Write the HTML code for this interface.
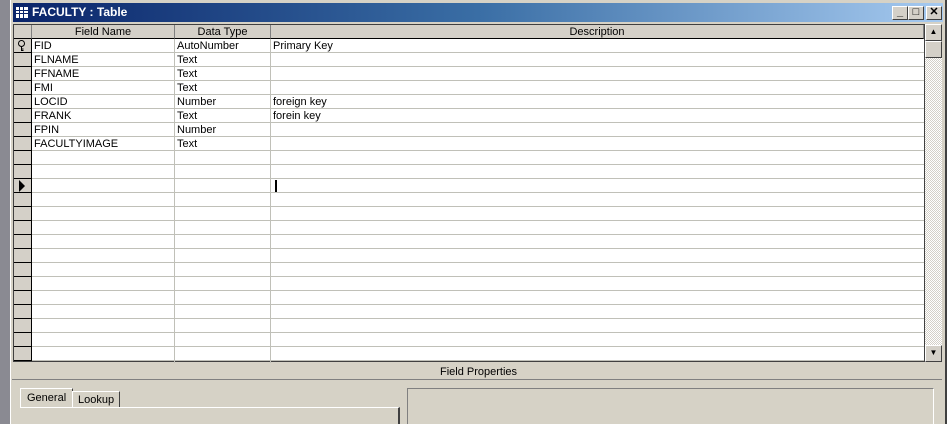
<!DOCTYPE html>
<html><head><style>
*{margin:0;padding:0;box-sizing:border-box}
html,body{width:947px;height:424px;overflow:hidden}
body{background:#d4d0c8;font-family:"Liberation Sans",Tahoma,sans-serif;font-size:11px;position:relative}
.abs{position:absolute}
.strip{left:0;top:0;width:10px;height:424px;background:#8a8a92}
.win{left:10px;top:0;width:937px;height:424px;background:#d6d2c6;border-left:1px solid #fff;border-right:2px solid #404040}
.title{left:13px;top:3px;width:930px;height:19px;background:linear-gradient(90deg,#0a246a 0%,#3a6ea5 50%,#a6caf0 100%);color:#fff;font-weight:bold;font-size:12px;line-height:19px;padding-left:19px}
.tb{top:6px;width:16px;height:14px;background:#d4d0c8;border:1px solid;border-color:#fff #404040 #404040 #fff;font-size:11px;line-height:11px;text-align:center;color:#000;font-weight:bold}
.grid{left:13px;top:24px;width:912px;height:338px;background:#fff;border:1px solid #404040}
.hdr{top:0;height:14px;background:#d4d0c8;border-right:1px solid #808080;border-bottom:1px solid #000;text-align:center;line-height:14px}
.row{position:absolute;left:0;width:910px;height:14px;border-bottom:1px solid #c0c0b8}
.sel{position:absolute;left:0;width:18px;height:14px;background:#d4d0c8;border-right:1px solid #000;border-bottom:1px solid #000}
.c{position:absolute;top:0;line-height:15px;padding-left:2px;height:14px}
.vl{position:absolute;top:14px;width:1px;height:324px;background:#c0c0b8}
.sb{left:925px;top:24px;width:17px;height:338px;background:repeating-conic-gradient(#d4d0c8 0 25%,#fff 0 50%) 0 0/2px 2px}
.btn{position:absolute;left:0;width:17px;height:17px;background:#d4d0c8;border:1px solid;border-color:#fff #404040 #404040 #fff}
</style></head><body>
<div class="abs strip"></div>
<div class="abs win"></div>
<div class="abs title">FACULTY : Table</div>
<svg class="abs" style="left:16px;top:7px" width="12" height="11"><rect x="0.5" y="0.5" width="11" height="10" fill="#fff" stroke="#fff"/><g stroke="#0a246a"><line x1="0" y1="3.5" x2="12" y2="3.5"/><line x1="0" y1="6.5" x2="12" y2="6.5"/><line x1="3.5" y1="0" x2="3.5" y2="11"/><line x1="7.5" y1="0" x2="7.5" y2="11"/></g></svg>
<div class="abs tb" style="left:892px">_</div>
<div class="abs tb" style="left:908px">□</div>
<div class="abs tb" style="left:926px">✕</div>
<div class="abs grid">
<div class="abs hdr" style="left:0;width:18px"></div>
<div class="abs hdr" style="left:18px;width:143px">Field Name</div>
<div class="abs hdr" style="left:161px;width:96px">Data Type</div>
<div class="abs hdr" style="left:257px;width:653px">Description</div>
<div class="vl" style="left:160px"></div>
<div class="vl" style="left:256px"></div>
<div id="rows"></div>
</div>
<div class="abs sb"><div class="btn" style="top:0;font-size:8px;text-align:center;line-height:14px">▲</div><div class="btn" style="top:17px"></div><div class="btn" style="top:321px;font-size:8px;text-align:center;line-height:14px">▼</div></div>
<div class="abs" style="left:440px;top:366px">Field Properties</div>
<div class="abs" style="left:12px;top:379px;width:930px;height:1px;background:#808080"></div>
<div class="abs" style="left:20px;top:388px;width:53px;height:20px;border:1px solid;border-color:#fff #404040 transparent #fff;padding:3px 0 0 6px">General</div>
<div class="abs" style="left:72px;top:391px;width:48px;height:17px;border:1px solid;border-color:#fff #404040 transparent #fff;padding:2px 0 0 5px">Lookup</div>
<div class="abs" style="left:20px;top:407px;width:380px;height:20px;border-top:1px solid #fff;border-right:2px solid #404040"></div>
<div class="abs" style="left:407px;top:388px;width:527px;height:40px;border:1px solid;border-color:#808080 #fff #fff #808080"></div>
<script>
var d=[["FID","AutoNumber","Primary Key"],["FLNAME","Text",""],["FFNAME","Text",""],["FMI","Text",""],["LOCID","Number","foreign key"],["FRANK","Text","forein key"],["FPIN","Number",""],["FACULTYIMAGE","Text",""]];
var h="";
for(var i=0;i<23;i++){var t=14+i*14;var r=d[i]||["","",""];
h+='<div class="row" style="top:'+t+'px"></div><div class="sel" style="top:'+t+'px">'+(i==0?'<svg style="position:absolute;left:3px;top:1px" width="9" height="12"><circle cx="4.5" cy="3.5" r="3" fill="none" stroke="#000"/><path d="M4.5 6.5V11M4.5 9H6.5M4.5 10.5H6.5" stroke="#000" fill="none"/></svg>':'')+(i==10?'<span style="position:absolute;left:5px;top:1px;width:0;height:0;border-left:6px solid #000;border-top:6px solid transparent;border-bottom:6px solid transparent"></span>':'')+'</div>';
h+='<div class="c" style="left:18px;top:'+t+'px">'+r[0]+'</div><div class="c" style="left:161px;top:'+t+'px">'+r[1]+'</div><div class="c" style="left:257px;top:'+t+'px">'+r[2]+'</div>';}
h+='<div style="position:absolute;left:261px;top:155px;width:2px;height:12px;background:#000"></div>';
document.getElementById("rows").innerHTML=h;
</script>
</body></html>
